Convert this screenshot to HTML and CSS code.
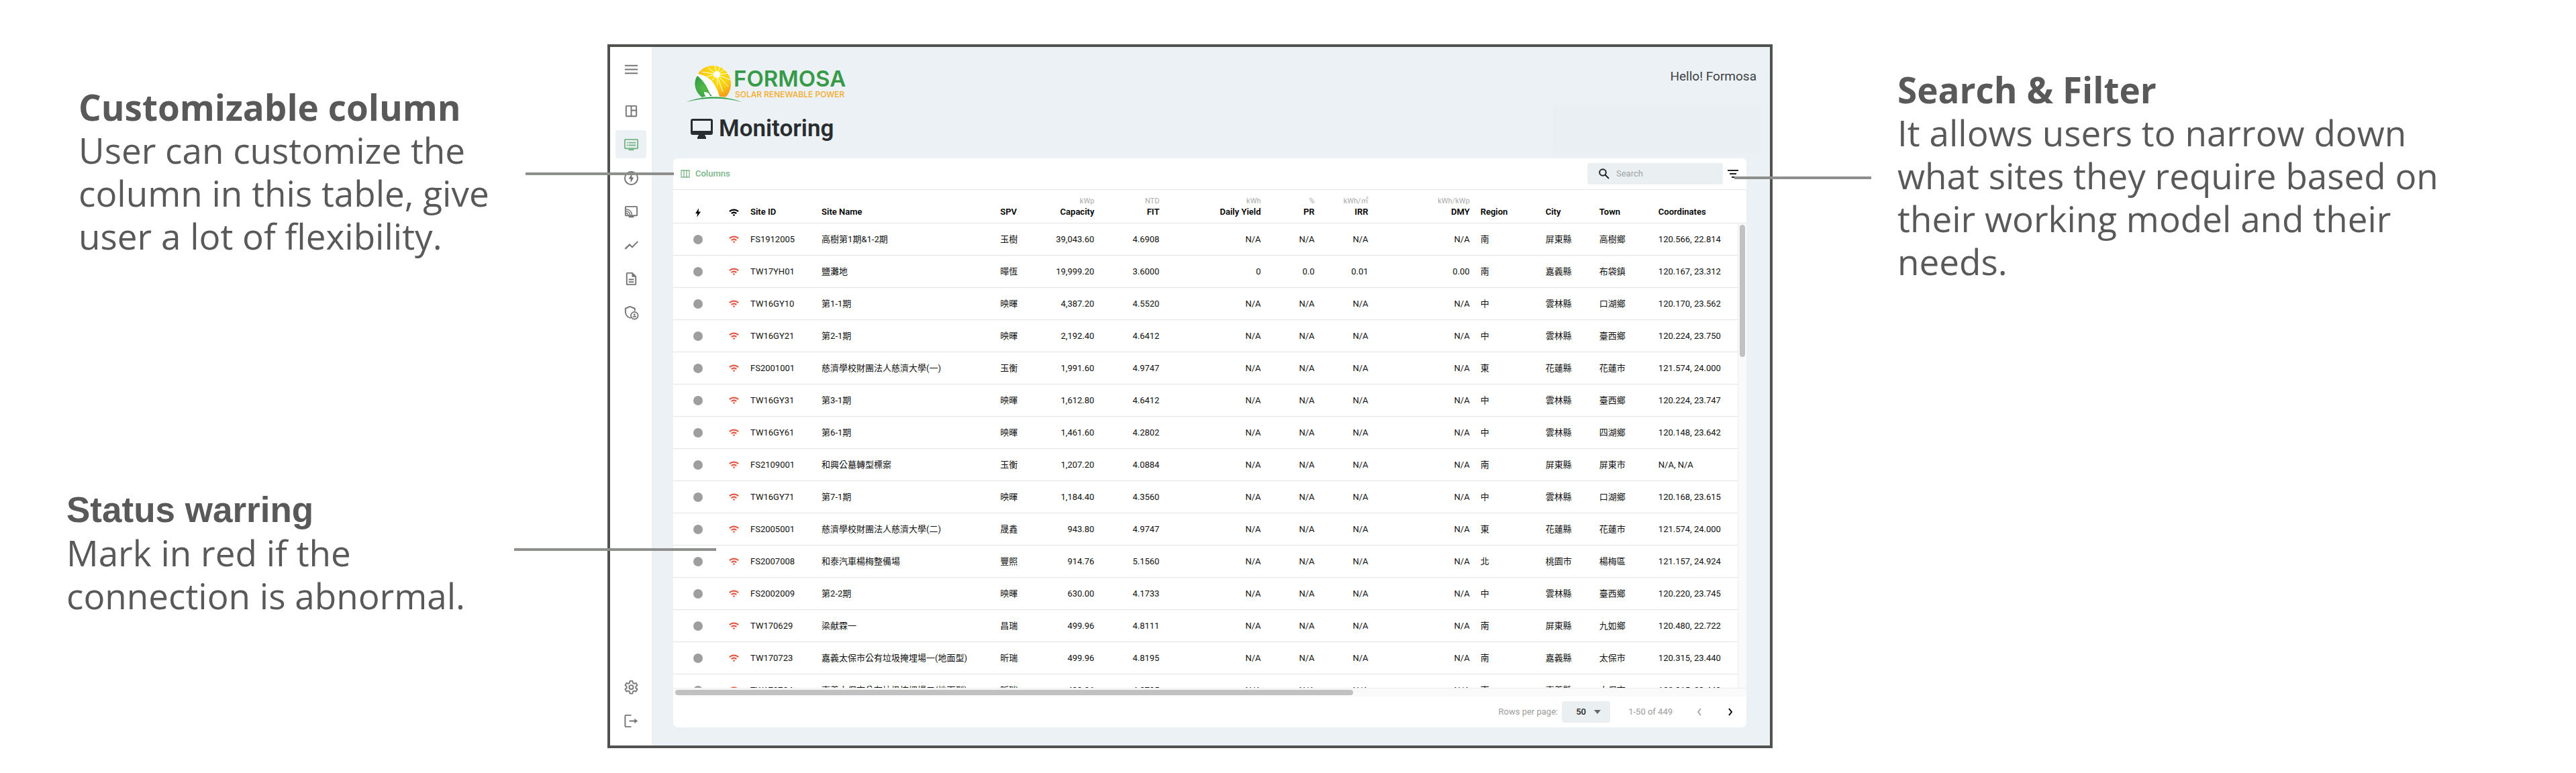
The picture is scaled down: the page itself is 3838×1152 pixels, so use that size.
FILE: index.html
```html
<!DOCTYPE html>
<html lang="en">
<head>
<meta charset="utf-8">
<title>Monitoring</title>
<link rel="stylesheet" href="styles.css">
</head>
<body>
<svg class="sprite" aria-hidden="true">
  <symbol id="wifi" viewBox="0 0 24 18"><path d="M0 5.500C6.800-1 17.200-1 24 5.500l-2.500 2.700C16 3 8 3 2.500 8.200zM4.700 10.300C8.800 6.300 15.200 6.300 19.300 10.300l-2.500 2.600C14 10.200 10 10.200 7.200 12.900z"/><circle cx="12" cy="15.700" r="2.200"/></symbol>
  <symbol id="bolt" viewBox="0 0 14 24"><path d="M9 0L0 14h5.500L4 24 14 9.500H8z"/></symbol>
</svg>
<main class="page">
  <section class="notes notes-left">
    <article class="note note-columns">
      <h2>Customizable column</h2>
      <p>User can customize the<br>column in this table, give<br>user a lot of flexibility.</p>
    </article>
    <article class="note note-status">
      <h2>Status warring</h2>
      <p>Mark in red if the<br>connection is abnormal.</p>
    </article>
  </section>

  <div class="frame">
    <nav class="sidebar" aria-label="Main">
      <button class="nav-item menu" aria-label="Menu"><svg viewBox="0 0 24 24"><path d="M2 5h20v2H2zM2 11h20v2H2zM2 17h20v2H2z"/></svg></button>
      <a class="nav-item" href="#" aria-label="Dashboard"><svg viewBox="0 0 24 24"><path fill-rule="evenodd" d="M5 3h14a2 2 0 0 1 2 2v14a2 2 0 0 1-2 2H5a2 2 0 0 1-2-2V5a2 2 0 0 1 2-2zM5 5v14h6V5zM13 5v5h6V5zM13 12v7h6v-7z"/></svg></a>
      <a class="nav-item active" href="#" aria-label="Monitoring"><svg viewBox="0 0 24 24"><path fill-rule="evenodd" d="M3 3h18a2 2 0 0 1 2 2v12a2 2 0 0 1-2 2h-5v2H8v-2H3a2 2 0 0 1-2-2V5a2 2 0 0 1 2-2zM3 5v12h18V5zM5 8h2v2H5zM8 8h11v2H8zM5 12h2v2H5zM8 12h11v2H8z"/></svg></a>
      <a class="nav-item" href="#" aria-label="Power"><svg viewBox="0 0 24 24"><path fill-rule="evenodd" d="M12 1a11 11 0 1 0 0 22 11 11 0 0 0 0-22zm0 2a9 9 0 1 1 0 18 9 9 0 0 1 0-18z"/><path d="M13 5l-5 8h3v6l5-8h-3z"/></svg></a>
      <a class="nav-item" href="#" aria-label="Devices"><svg viewBox="0 0 24 24"><path fill-rule="evenodd" d="M4 3h16a2 2 0 0 1 2 2v12a2 2 0 0 1-2 2h-4v2H8v-2H4a2 2 0 0 1-2-2V5a2 2 0 0 1 2-2zM4 5v12h16V5z"/><path d="M4 14a3 3 0 0 1 3 3M4 11a6 6 0 0 1 6 6M4 8a9 9 0 0 1 9 9" fill="none" stroke="currentColor" stroke-width="1.500"/></svg></a>
      <a class="nav-item" href="#" aria-label="Trends"><svg viewBox="0 0 24 24"><path d="M3.500 18.500l6-6 4 4L23 6.900l-1.400-1.400-8.100 8-4-4L1.500 17z"/></svg></a>
      <a class="nav-item" href="#" aria-label="Reports"><svg viewBox="0 0 24 24"><path d="M8 16h8v2H8zm0-4h8v2H8zm6-10H6a2 2 0 0 0-2 2v16a2 2 0 0 0 2 2h12a2 2 0 0 0 2-2V8zm4 18H6V4h7v5h5z"/></svg></a>
      <a class="nav-item" href="#" aria-label="Permissions"><svg viewBox="0 0 24 24"><path d="M17.500 10V6L10 3 3 6v5c0 4.500 3 8.600 8 10" fill="none" stroke="currentColor" stroke-width="2" stroke-linejoin="round"/><circle cx="17" cy="17" r="5.600" fill="none" stroke="currentColor" stroke-width="1.800"/><circle cx="17" cy="15.300" r="1.500"/><path d="M14 19.500c0-3 6-3 6 0z"/></svg></a>
      <span class="spacer"></span>
      <a class="nav-item" href="#" aria-label="Settings"><svg viewBox="0 0 24 24"><g fill="none" stroke="currentColor" stroke-width="1.900" stroke-linejoin="round"><path d="M10 2h4l.6 3 1.900 1.100 2.900-1 2 3.500-2.300 2v2.200l2.300 2-2 3.500-2.900-1-1.900 1.100-.6 3.100h-4l-.6-3.100-1.900-1.100-2.900 1-2-3.500 2.300-2v-2.200l-2.300-2 2-3.500 2.900 1L9.400 5z"/><circle cx="12" cy="11.700" r="3.200"/></g></svg></a>
      <a class="nav-item" href="#" aria-label="Log out"><svg viewBox="0 0 24 24"><path d="M12 3H4a1.500 1.500 0 0 0-1.500 1.500v15A1.500 1.500 0 0 0 4 21h8M9 12h11" fill="none" stroke="currentColor" stroke-width="2"/><path d="M17 8l5 4-5 4z"/></svg></a>
    </nav>

    <div class="content">
      <header class="topbar">
        <div class="logo">
          <svg class="logo-mark" viewBox="0 0 82 56" aria-hidden="true">
            <defs>
              <radialGradient id="sun" cx="45" cy="14" r="38" gradientUnits="userSpaceOnUse"><stop offset="0" stop-color="#ffe600"/><stop offset=".5" stop-color="#fbcf0c"/><stop offset="1" stop-color="#f0901e"/></radialGradient>
              <radialGradient id="land" cx="26" cy="34" r="20" gradientUnits="userSpaceOnUse"><stop offset="0" stop-color="#57bb46"/><stop offset="1" stop-color="#2f9a48"/></radialGradient>
            </defs>
            <path fill="#fff" d="M17 13L14 17C24 26 32 38 38 47l12 1C47 38 41 25 32 19z"/>
            <path fill="url(#sun)" d="M17 13C22 5 30 1 39 1c15 0 27 12 27 27 0 8-3 15-8 19.500l-9-.5C47 38 41 25 32 19 28 16 23 14 17 13z"/>
            <path fill="url(#land)" d="M16 16C10 24 11 39 23 48c5-2 9-2 15-2C31 40 33 30 16 16z"/>
            <path fill="#fff" d="M26 40c5 0 9 2 9 8-6 0-9-3-9-8z"/>
            <path fill="none" stroke="#fff" stroke-width="1" d="M45 14L42 1M45 14L50 2M45 14L57 6M45 14L32 4M45 14L22 10M45 14l19-2M45 14l20 8M45 14l17 18M45 14l9 26M45 14l1 16M45 14L36 25M45 14l-15 3"/>
            <circle cx="45" cy="14" r="5" fill="#fff"/>
            <path fill="#35a04a" d="M0 55C24 45 57 45 82 55 57 48 25 48 0 55z"/>
          </svg>
          <div class="logo-text"><strong>FORMOSA</strong><span>SOLAR RENEWABLE POWER</span></div>
        </div>
        <span class="greeting">Hello! Formosa</span>
      </header>
      <div class="titlebar">
        <h1><svg viewBox="0 0 33 30" aria-hidden="true"><path fill-rule="evenodd" d="M3 0h27a3 3 0 0 1 3 3v18a3 3 0 0 1-3 3h-9l2 4v2H10v-2l2-4H3a3 3 0 0 1-3-3V3a3 3 0 0 1 3-3zM3 3v15h27V3z"/></svg>Monitoring</h1>
        <div class="panel"></div>
      </div>

      <section class="card">
        <div class="toolbar">
          <button class="columns-btn"><svg viewBox="0 0 14 12" aria-hidden="true"><path d="M1 1h12v10H1zM5 1v10M9 1v10" fill="none" stroke="currentColor" stroke-width="1.300"/></svg>Columns</button>
          <div class="tools">
            <label class="search"><svg viewBox="0 0 16 16" aria-hidden="true"><circle cx="6" cy="6" r="4.800"/><path d="M9.500 9.500L15 15"/></svg><input type="text" placeholder="Search" aria-label="Search"></label>
            <button class="filter" aria-label="Filter"><svg viewBox="0 0 16 12" aria-hidden="true"><path d="M0 0h16v2H0zM3 5h10v2H3zM6 10h4v2H6z"/></svg></button>
          </div>
        </div>
        <div class="grid">
          <div class="viewport">
            <table>
              <colgroup><col class="w73"><col class="w34"><col class="w106"><col class="w266"><col class="w76"><col class="w80"><col class="w97"><col class="w151"><col class="w80"><col class="w80"><col class="w151"><col class="w97"><col class="w80"><col class="w88"><col class="w139"></colgroup>
              <thead><tr>
                <th class="i"><svg class="bolt" role="img" aria-label="Power"><use href="#bolt"/></svg></th>
                <th class="i"><svg class="wifi" role="img" aria-label="Connection"><use href="#wifi"/></svg></th>
                <th>Site ID</th><th>Site Name</th><th>SPV</th>
                <th class="n"><small>kWp</small>Capacity</th><th class="n"><small>NTD</small>FIT</th><th class="n"><small>kWh</small>Daily Yield</th><th class="n"><small>%</small>PR</th><th class="n"><small>kWh/㎡</small>IRR</th><th class="n"><small>kWh/kWp</small>DMY</th>
                <th>Region</th><th>City</th><th>Town</th><th>Coordinates</th>
              </tr></thead>
              <tbody>
                <tr><td class="i"><i class="dot"></i></td><td class="i"><svg class="wifi"><use href="#wifi"/></svg></td><td>FS1912005</td><td>高樹第1期&amp;1-2期</td><td>玉樹</td><td class="n">39,043.60</td><td class="n">4.6908</td><td class="n">N/A</td><td class="n">N/A</td><td class="n">N/A</td><td class="n">N/A</td><td>南</td><td>屏東縣</td><td>高樹鄉</td><td>120.566, 22.814</td></tr>
                <tr><td class="i"><i class="dot"></i></td><td class="i"><svg class="wifi"><use href="#wifi"/></svg></td><td>TW17YH01</td><td>鹽灘地</td><td>曄恆</td><td class="n">19,999.20</td><td class="n">3.6000</td><td class="n">0</td><td class="n">0.0</td><td class="n">0.01</td><td class="n">0.00</td><td>南</td><td>嘉義縣</td><td>布袋鎮</td><td>120.167, 23.312</td></tr>
                <tr><td class="i"><i class="dot"></i></td><td class="i"><svg class="wifi"><use href="#wifi"/></svg></td><td>TW16GY10</td><td>第1-1期</td><td>映暉</td><td class="n">4,387.20</td><td class="n">4.5520</td><td class="n">N/A</td><td class="n">N/A</td><td class="n">N/A</td><td class="n">N/A</td><td>中</td><td>雲林縣</td><td>口湖鄉</td><td>120.170, 23.562</td></tr>
                <tr><td class="i"><i class="dot"></i></td><td class="i"><svg class="wifi"><use href="#wifi"/></svg></td><td>TW16GY21</td><td>第2-1期</td><td>映暉</td><td class="n">2,192.40</td><td class="n">4.6412</td><td class="n">N/A</td><td class="n">N/A</td><td class="n">N/A</td><td class="n">N/A</td><td>中</td><td>雲林縣</td><td>臺西鄉</td><td>120.224, 23.750</td></tr>
                <tr><td class="i"><i class="dot"></i></td><td class="i"><svg class="wifi"><use href="#wifi"/></svg></td><td>FS2001001</td><td>慈濟學校財團法人慈濟大學(一)</td><td>玉衡</td><td class="n">1,991.60</td><td class="n">4.9747</td><td class="n">N/A</td><td class="n">N/A</td><td class="n">N/A</td><td class="n">N/A</td><td>東</td><td>花蓮縣</td><td>花蓮市</td><td>121.574, 24.000</td></tr>
                <tr><td class="i"><i class="dot"></i></td><td class="i"><svg class="wifi"><use href="#wifi"/></svg></td><td>TW16GY31</td><td>第3-1期</td><td>映暉</td><td class="n">1,612.80</td><td class="n">4.6412</td><td class="n">N/A</td><td class="n">N/A</td><td class="n">N/A</td><td class="n">N/A</td><td>中</td><td>雲林縣</td><td>臺西鄉</td><td>120.224, 23.747</td></tr>
                <tr><td class="i"><i class="dot"></i></td><td class="i"><svg class="wifi"><use href="#wifi"/></svg></td><td>TW16GY61</td><td>第6-1期</td><td>映暉</td><td class="n">1,461.60</td><td class="n">4.2802</td><td class="n">N/A</td><td class="n">N/A</td><td class="n">N/A</td><td class="n">N/A</td><td>中</td><td>雲林縣</td><td>四湖鄉</td><td>120.148, 23.642</td></tr>
                <tr><td class="i"><i class="dot"></i></td><td class="i"><svg class="wifi"><use href="#wifi"/></svg></td><td>FS2109001</td><td>和興公墓轉型標案</td><td>玉衡</td><td class="n">1,207.20</td><td class="n">4.0884</td><td class="n">N/A</td><td class="n">N/A</td><td class="n">N/A</td><td class="n">N/A</td><td>南</td><td>屏東縣</td><td>屏東市</td><td>N/A, N/A</td></tr>
                <tr><td class="i"><i class="dot"></i></td><td class="i"><svg class="wifi"><use href="#wifi"/></svg></td><td>TW16GY71</td><td>第7-1期</td><td>映暉</td><td class="n">1,184.40</td><td class="n">4.3560</td><td class="n">N/A</td><td class="n">N/A</td><td class="n">N/A</td><td class="n">N/A</td><td>中</td><td>雲林縣</td><td>口湖鄉</td><td>120.168, 23.615</td></tr>
                <tr><td class="i"><i class="dot"></i></td><td class="i"><svg class="wifi"><use href="#wifi"/></svg></td><td>FS2005001</td><td>慈濟學校財團法人慈濟大學(二)</td><td>晟鑫</td><td class="n">943.80</td><td class="n">4.9747</td><td class="n">N/A</td><td class="n">N/A</td><td class="n">N/A</td><td class="n">N/A</td><td>東</td><td>花蓮縣</td><td>花蓮市</td><td>121.574, 24.000</td></tr>
                <tr><td class="i"><i class="dot"></i></td><td class="i"><svg class="wifi"><use href="#wifi"/></svg></td><td>FS2007008</td><td>和泰汽車楊梅整備場</td><td>豐照</td><td class="n">914.76</td><td class="n">5.1560</td><td class="n">N/A</td><td class="n">N/A</td><td class="n">N/A</td><td class="n">N/A</td><td>北</td><td>桃園市</td><td>楊梅區</td><td>121.157, 24.924</td></tr>
                <tr><td class="i"><i class="dot"></i></td><td class="i"><svg class="wifi"><use href="#wifi"/></svg></td><td>FS2002009</td><td>第2-2期</td><td>映暉</td><td class="n">630.00</td><td class="n">4.1733</td><td class="n">N/A</td><td class="n">N/A</td><td class="n">N/A</td><td class="n">N/A</td><td>中</td><td>雲林縣</td><td>臺西鄉</td><td>120.220, 23.745</td></tr>
                <tr><td class="i"><i class="dot"></i></td><td class="i"><svg class="wifi"><use href="#wifi"/></svg></td><td>TW170629</td><td>梁献霖一</td><td>昌瑞</td><td class="n">499.96</td><td class="n">4.8111</td><td class="n">N/A</td><td class="n">N/A</td><td class="n">N/A</td><td class="n">N/A</td><td>南</td><td>屏東縣</td><td>九如鄉</td><td>120.480, 22.722</td></tr>
                <tr><td class="i"><i class="dot"></i></td><td class="i"><svg class="wifi"><use href="#wifi"/></svg></td><td>TW170723</td><td>嘉義太保市公有垃圾掩埋場一(地面型)</td><td>昕瑞</td><td class="n">499.96</td><td class="n">4.8195</td><td class="n">N/A</td><td class="n">N/A</td><td class="n">N/A</td><td class="n">N/A</td><td>南</td><td>嘉義縣</td><td>太保市</td><td>120.315, 23.440</td></tr>
                <tr><td class="i"><i class="dot"></i></td><td class="i"><svg class="wifi"><use href="#wifi"/></svg></td><td>TW170724</td><td>嘉義太保市公有垃圾掩埋場二(地面型)</td><td>昕瑞</td><td class="n">499.96</td><td class="n">4.2795</td><td class="n">N/A</td><td class="n">N/A</td><td class="n">N/A</td><td class="n">N/A</td><td>南</td><td>嘉義縣</td><td>太保市</td><td>120.315, 23.440</td></tr>
              </tbody>
            </table>
          </div>
          <div class="vscroll"><div class="vthumb"></div></div>
          <div class="hscroll"><div class="hthumb"></div></div>
        </div>
        <footer class="pager">
          <label for="rows">Rows per page:</label>
          <span class="select"><select id="rows"><option>50</option></select></span>
          <span class="range">1-50 of 449</span>
          <button class="prev" aria-label="Previous page"><svg viewBox="0 0 8 12"><path d="M6 1L2 6l4 5"/></svg></button>
          <button class="next" aria-label="Next page"><svg viewBox="0 0 8 12"><path d="M2 1l4 5-4 5"/></svg></button>
        </footer>
      </section>
    </div>
    <span class="pointer pointer-columns"></span>
    <span class="pointer pointer-status"></span>
    <span class="pointer pointer-filter"></span>
  </div>

  <section class="notes notes-right">
    <article class="note">
      <h2>Search &amp; Filter</h2>
      <p>It allows users to narrow down<br>what sites they require based on<br>their working model and their<br>needs.</p>
    </article>
  </section>
</main>
</body>
</html>
```
FILE: styles.css
```css
* { box-sizing: border-box; }
body { margin: 0; background: #fff; color: #111; font-family: Roboto, "Noto Sans CJK TC", sans-serif; font-size: 13px; line-height: 16px; }
button, input, select { font: inherit; border: 0; background: none; padding: 0; margin: 0; }
svg { display: block; fill: currentColor; }
.sprite { position: absolute; width: 0; height: 0; }

.page { display: grid; grid-template-columns: 905fr 1736fr 1197fr; align-items: start; padding: 66px 0 37px; }

/* notes around the window */
.note { color: #595959; font: 53px/64px "Open Sans", sans-serif; white-space: nowrap; }
.note h2, .note p { margin: 0; font-size: inherit; }
.notes-left { padding: 62px 0 0 117px; }
.note-status { margin: 344px 0 0 -18px; }
.note-status h2 { font-family: "Liberation Sans", sans-serif; }
.notes-right { padding: 36px 0 0 186px; }

.frame { position: relative; display: flex; border: 4px solid #50524f; background: #ebf1f4; }
.pointer { position: absolute; height: 4px; background: #8d8f8d; }
.pointer-columns { left: -126px; top: 187px; width: 221px; }
.pointer-status { left: -143px; top: 747px; width: 301px; }
.pointer-filter { right: -151px; top: 193px; width: 204px; }

.sidebar { flex: none; width: 62px; padding: 12px 8px 16px; background: #fff; display: flex; flex-direction: column; gap: 8px; color: #757575; }
.nav-item { height: 42px; border-radius: 4px; color: inherit; display: flex; align-items: center; justify-content: center; }
.nav-item svg { width: 23px; height: 23px; }
.nav-item.menu { margin-bottom: 12px; }
.nav-item.active { background: #ebf1f4; color: #78b587; }
.spacer { flex: 1; }

.content { flex: 1; min-width: 0; padding-bottom: 27px; }
.topbar { height: 87px; padding: 27px 20px 0 52px; display: flex; justify-content: space-between; align-items: flex-start; }
.logo { display: flex; }
.logo-mark { width: 82px; height: 56px; }
.logo-text { margin-left: -12px; padding-top: 4px; display: flex; flex-direction: column; font-family: Inter, sans-serif; }
.logo-text strong { font-size: 33px; line-height: 32px; font-weight: 600; color: #379a49; }
.logo-text span { font-size: 12px; line-height: 16px; font-weight: 500; color: #f5ab27; padding-left: 2px; }
.greeting { font-size: 19px; line-height: 24px; padding-top: 5px; color: #3c4043; }
.titlebar { height: 70px; padding: 0 13px 0 58px; display: flex; justify-content: space-between; align-items: center; }
.titlebar h1 { margin: 0; display: flex; align-items: center; gap: 9px; font-size: 35px; line-height: 40px; font-weight: 600; color: #292d30; }
.titlebar h1 svg { width: 33px; height: 30px; }
.panel { width: 311px; height: 70px; background: #e9eff2; }

.card { margin: 9px 35px 0 32px; background: #fff; border-radius: 7px; }
.toolbar { height: 47px; border-bottom: 1px solid #e6e6e6; padding: 0 12px 0 11px; display: flex; justify-content: space-between; align-items: center; }
.columns-btn { display: flex; align-items: center; gap: 8px; color: #78b587; font-weight: 500; }
.columns-btn svg { width: 14px; height: 12px; }
.tools { display: flex; align-items: center; gap: 7px; }
.search { width: 202px; height: 32px; border-radius: 4px; background: #eaf0f2; display: flex; align-items: center; gap: 10px; padding-left: 17px; }
.search svg { width: 16px; height: 16px; fill: none; stroke: #222; stroke-width: 2; }
.search input { width: 140px; outline: 0; }
.search input::placeholder { color: #a0a4a5; }
.filter { color: #222; }
.filter svg { width: 16px; height: 12px; }

.grid { position: relative; }
.viewport { height: 742px; overflow: hidden; }
table { width: 100%; table-layout: fixed; border-collapse: separate; border-spacing: 0; }
.w34 { width: 34px; } .w73 { width: 73px; } .w76 { width: 76px; } .w80 { width: 80px; } .w88 { width: 88px; }
.w97 { width: 97px; } .w106 { width: 106px; } .w139 { width: 139px; } .w151 { width: 151px; } .w266 { width: 266px; }
th, td { padding: 0 8px; text-align: left; white-space: nowrap; border-bottom: 1px solid #e4e4e4; }
th { height: 50px; padding-bottom: 8px; vertical-align: bottom; font-weight: 600; color: #000; }
th small { display: block; font-size: 11px; font-weight: 400; color: #aaa; }
td { height: 48px; }
.n { text-align: right; }
.i { padding-left: 0; padding-right: 0; }
.wifi { width: 15px; height: 11px; margin: 0 auto; }
td .wifi { color: #e8594a; }
th .wifi { margin-bottom: 2px; }
.bolt { width: 8px; height: 14px; margin: 0 auto; }
.dot { display: block; width: 14px; height: 14px; border-radius: 50%; background: #9e9e9e; margin: 0 auto; }
.vscroll { position: absolute; top: 50px; right: 0; bottom: 13px; width: 13px; background: #fafafa; border-left: 1px solid #ededed; padding: 2px; }
.vthumb { width: 8px; height: 197px; border-radius: 4px; background: #c1c1c1; }
.hscroll { height: 13px; background: #fafafa; border-top: 1px solid #ededed; padding: 2px 3px; }
.hthumb { width: 63.400%; height: 8px; border-radius: 4px; background: #c1c1c1; }

.pager { height: 46px; padding-right: 20px; display: flex; align-items: center; justify-content: flex-end; color: #9c9c9c; }
.select { position: relative; margin: 0 27px 0 6px; }
.select::after { content: ""; position: absolute; right: 14px; top: 13px; border: 5px solid transparent; border-top: 6px solid #666; border-bottom: 0; pointer-events: none; }
.select select { display: block; appearance: none; width: 72px; height: 32px; padding-left: 21px; border-radius: 4px; background: #eaf0f2; color: #222; font-weight: 500; }
.pager button svg { width: 8px; height: 12px; fill: none; stroke: currentColor; stroke-width: 2; }
.prev { color: #aaa; margin-left: 36px; }
.next { color: #000; margin-left: 38px; }
```
